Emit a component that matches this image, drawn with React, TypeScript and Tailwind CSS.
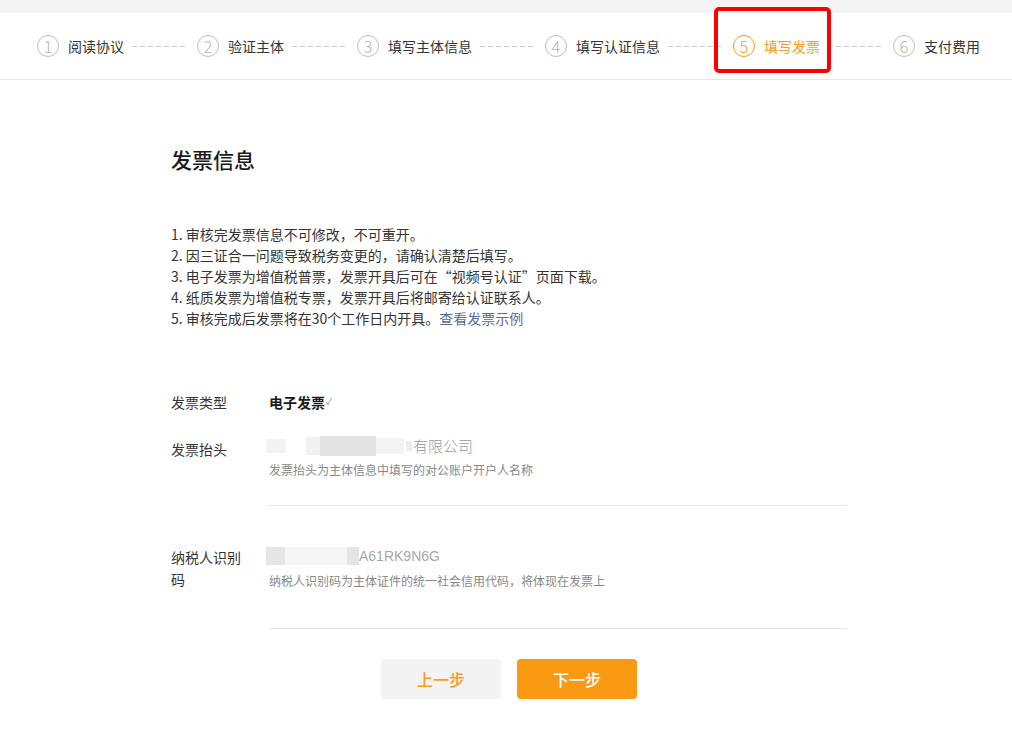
import React from "react";

const STEPS = ["阅读协议", "验证主体", "填写主体信息", "填写认证信息", "填写发票", "支付费用"];
const ACTIVE = 4;

const NOTES = [
  "1. 审核完发票信息不可修改，不可重开。",
  "2. 因三证合一问题导致税务变更的，请确认清楚后填写。",
  "3. 电子发票为增值税普票，发票开具后可在“视频号认证”页面下载。",
  "4. 纸质发票为增值税专票，发票开具后将邮寄给认证联系人。",
];

function Steps() {
  return (
    <div className="flex h-[67px] items-center border-b border-[#e7e7e7] pl-[37px]">
      {STEPS.map((s, i) => {
        const active = i === ACTIVE;
        return (
          <React.Fragment key={s}>
            <div
              className={`flex h-[22px] w-[22px] items-center justify-center rounded-full border text-[16px] font-light leading-none ${
                active ? "border-[#f89c1c] text-[#f89c1c]" : "border-[#bdbdbd] text-[#b2b2b2]"
              }`}
            >
              {i + 1}
            </div>
            <span
              className={`ml-[9px] text-[14px] leading-[22px] ${active ? "text-[#f89c1c]" : "text-[#353535]"}`}
            >
              {s}
            </span>
            {i < STEPS.length - 1 && (
              <div className="mx-[8px] mr-[9px] h-px w-[56px] bg-[repeating-linear-gradient(to_right,#cccccc_0,#cccccc_5px,transparent_5px,transparent_8px)]" />
            )}
          </React.Fragment>
        );
      })}
    </div>
  );
}

export default function App() {
  return (
    <div
      className="relative min-h-[730px] bg-white text-[#353535]"
      style={{ fontFamily: '"Noto Sans CJK SC", "Noto Sans", sans-serif' }}
    >
      <div className="h-[13px] bg-[#f4f4f4]" />
      <Steps />

      {/* annotation box round the active step */}
      <div className="absolute left-[714px] top-[7px] h-[66px] w-[117px] rounded-[5px] border-4 border-[#ff0000]" />

      <div className="ml-[171px] w-[676px] pt-[65px]">
        <h2 className="text-[21px] font-medium leading-[28px] text-[#1a1a1a]">发票信息</h2>

        <ul className="mt-[51px] text-[14px] leading-[21px] text-[#353535]">
          {NOTES.map((n) => (
            <li key={n}>{n}</li>
          ))}
          <li>
            5. 审核完成后发票将在30个工作日内开具。
            <a className="text-[#576b95]">查看发票示例</a>
          </li>
        </ul>

        {/* 发票类型 */}
        <div className="mt-[62px] flex text-[14px] leading-[22px]">
          <div className="mr-[22px] w-[76px]">发票类型</div>
          <div className="flex items-center font-semibold text-[#1a1a1a]">
            电子发票
            <span className="ml-px text-[9px] font-normal text-[#888]">✓</span>
          </div>
        </div>

        {/* 发票抬头 */}
        <div className="mt-[22px] flex">
          <div className="mr-[22px] w-[76px] pt-[3px] text-[14px] leading-[22px]">发票抬头</div>
          <div className="flex-1 border-b border-[#e5e5e5] pb-[26px]">
            <div className="flex h-[22px] items-center text-[15px] font-light text-[#9a9a9a]">
              <span className="-ml-[3px] h-[14px] w-[20px] bg-[#f3f3f3]" />
              <span className="ml-[20px] h-[18px] w-[14px] bg-[#f1f1f1]" />
              <span className="h-[20px] w-[56px] bg-[#e4e4e4]" />
              <span className="h-[16px] w-[28px] bg-[#f4f4f4]" />
              <span className="ml-[2px] h-[10px] w-[6px] bg-[#ececec]" />
              <span className="ml-[1px]">有限公司</span>
            </div>
            <div className="mt-1 text-[12px] leading-[18px] text-[#888]">发票抬头为主体信息中填写的对公账户开户人名称</div>
          </div>
        </div>

        {/* 纳税人识别码 */}
        <div className="mt-[39px] flex">
          <div className="mr-[22px] w-[76px] pt-px text-[14px] leading-[22px]">纳税人识别码</div>
          <div className="flex-1 border-b border-[#e5e5e5] pb-[38px]">
            <div className="flex h-[22px] items-center text-[14px] text-[#a8a8a8]">
              <span className="-ml-[3px] h-[18px] w-[19px] bg-[#e6e6e6]" />
              <span className="h-[18px] w-[62px] bg-[#f6f6f6]" />
              <span className="h-[18px] w-[12px] bg-[#e4e4e4]" />
              <span style={{ fontFamily: '"Liberation Sans", Arial, sans-serif' }}>A61RK9N6G</span>
            </div>
            <div className="mt-[5px] text-[12px] leading-[18px] text-[#888]">纳税人识别码为主体证件的统一社会信用代码，将体现在发票上</div>
          </div>
        </div>

        <div className="mt-[30px] flex justify-center gap-4">
          <button className="h-[40px] w-[120px] rounded-[4px] bg-[#f3f3f3] text-[16px] font-medium text-[#f89c1c]">
            上一步
          </button>
          <button className="h-[40px] w-[120px] rounded-[4px] bg-[#f99a12] text-[16px] font-medium text-white">
            下一步
          </button>
        </div>
      </div>
    </div>
  );
}
